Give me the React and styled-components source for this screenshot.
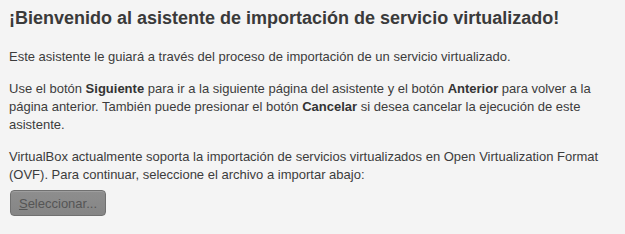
import React from "react";
import styled, { createGlobalStyle } from "styled-components";

const GlobalStyle = createGlobalStyle`
  html, body {
    margin: 0;
    padding: 0;
    background: #f4f4f4;
  }
  body {
    font-family: "Liberation Sans", Arial, sans-serif;
    color: #3c3c3c;
  }
`;

const Page = styled.div`
  width: 625px;
  height: 234px;
  box-sizing: border-box;
  padding: 5px 16px 0 9px;
  display: flex;
  flex-direction: column;
  gap: 14px;
  background: #f4f4f4;
`;

const Title = styled.h1`
  margin: 0 0 2px;
  font-size: 18px;
  font-weight: bold;
  line-height: 27px;
  color: #3a3a3a;
`;

const Text = styled.p`
  margin: 0;
  font-size: 13px;
  line-height: 18px;
  color: #3c3c3c;
  b {
    font-weight: bold;
    color: #333;
  }
`;

const Button = styled.button`
  align-self: flex-start;
  margin-top: -8px;
  margin-left: 1px;
  width: 96px;
  height: 26px;
  padding: 0;
  border: 1px solid #707070;
  border-radius: 4px;
  background: linear-gradient(#8e8e8e, #858585);
  box-shadow: inset 0 1px 0 rgba(255, 255, 255, 0.15);
  font-family: "Liberation Sans", Arial, sans-serif;
  font-size: 13px;
  color: #555;
  u {
    text-decoration: underline;
  }
`;

export default function App() {
  return (
    <>
      <GlobalStyle />
      <Page>
        <Title>¡Bienvenido al asistente de importación de servicio virtualizado!</Title>
        <Text>Este asistente le guiará a través del proceso de importación de un servicio virtualizado.</Text>
        <Text>
          Use el botón <b>Siguiente</b> para ir a la siguiente página del asistente y el botón{" "}
          <b>Anterior</b> para volver a la página anterior. También puede presionar el botón{" "}
          <b>Cancelar</b> si desea cancelar la ejecución de este asistente.
        </Text>
        <Text>
          VirtualBox actualmente soporta la importación de servicios virtualizados en Open
          Virtualization Format (OVF). Para continuar, seleccione el archivo a importar abajo:
        </Text>
        <Button>
          <u>S</u>eleccionar...
        </Button>
      </Page>
    </>
  );
}
